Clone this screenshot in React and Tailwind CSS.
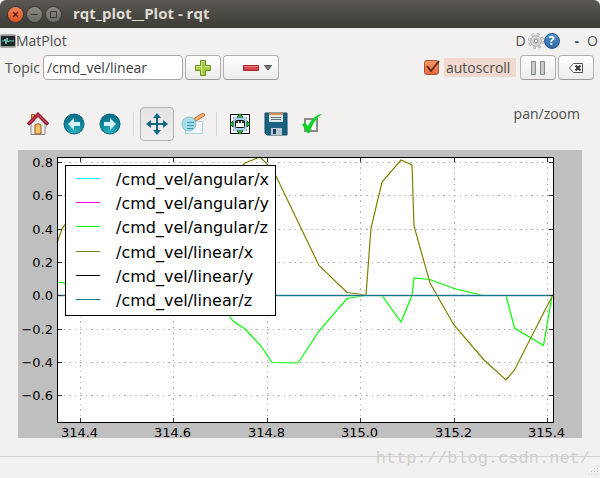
import React from "react";

const X_TICKS = [
  [62.5, "314.4"], [155.5, "314.6"], [249.5, "314.8"],
  [342.5, "315.0"], [436.5, "315.2"], [529.5, "315.4"],
];
const Y_TICKS = [
  [12.5, "0.8"], [45.5, "0.6"], [79.5, "0.4"], [112.5, "0.2"],
  [145.5, "0.0"], [179.5, "−0.2"], [212.5, "−0.4"], [245.5, "−0.6"],
];
const SERIES = [
  ["/cmd_vel/angular/x", "#00ffff"],
  ["/cmd_vel/angular/y", "#ff00ff"],
  ["/cmd_vel/angular/z", "#00ff00"],
  ["/cmd_vel/linear/x", "#808000"],
  ["/cmd_vel/linear/y", "#000000"],
  ["/cmd_vel/linear/z", "#008080"],
];
const LINEAR_X =
  "39,93 44,79 50,70 100,140 180,80 225,15 227,13 242,7 249,14 258,26 282,76 301,115.5 329,142.5 348,145 353,78 364,32 383,10 394,15 396,76 412,133 436,175 466,210 488,230 496.5,220 526,162 534.5,146";
const ANGULAR_Z =
  "39,132.5 45,132.5 50,136 120,140 200,150 211,165 215,171 227,179 243,196 254,212.5 280,213 282,210 301,181 329,148.5 348,145.5 364,145.5 383,172 394,145.5 396,128 412,129.5 436,138.5 465,145.5 488,145.5 496.5,178 525.5,195.5 534,146";

function Plot() {
  return (
    <svg viewBox="0 0 564 288" className="block w-full overflow-visible bg-[#bfbfbf] font-['DejaVu_Sans',sans-serif]" role="img" aria-label="Topic values over time">
      <rect x="39.5" y="7.5" width="496" height="265" fill="#fff" />
      <g stroke="#b4b4b4" strokeDasharray="2 4 1 4">
        {X_TICKS.map(([x]) => <line key={x} x1={x} x2={x} y1="272" y2="8" />)}
        {Y_TICKS.map(([y]) => <line key={y} x1="40" x2="535" y1={y} y2={y} />)}
      </g>
      <polyline points={ANGULAR_Z} fill="none" stroke="#00ff00" strokeWidth="1.2" />
      <polyline points={LINEAR_X} fill="none" stroke="#808000" strokeWidth="1.2" />
      <line x1="40" x2="535" y1="145.5" y2="145.5" stroke="#9db9c9" strokeWidth="2" />
      <line x1="40" x2="535" y1="145.5" y2="145.5" stroke="#137a8c" />
      <g stroke="#333">
        {X_TICKS.map(([x]) => <path key={x} d={`M${x} 8v4M${x} 272v-4`} />)}
        {Y_TICKS.map(([y]) => <path key={y} d={`M40 ${y}h4M535 ${y}h-4`} />)}
      </g>
      <rect x="39.5" y="7.5" width="496" height="265" fill="none" stroke="#000" />
      <g fontSize="13" fill="#000">
        {X_TICKS.map(([x, t]) => <text key={t} x={x - 1} y="287" textAnchor="middle">{t}</text>)}
        {Y_TICKS.map(([y, t]) => <text key={t} x="35" y={y + 4} textAnchor="end">{t}</text>)}
      </g>
      <rect x="47.5" y="15.5" width="210" height="150" fill="#fff" stroke="#000" />
      {SERIES.map(([name, color], i) => (
        <g key={name}>
          <rect x="58" width="24" height="1" y={28 + Math.round(i * 24.2)} fill={color} shapeRendering="crispEdges" />
          <text x="98" y={35 + Math.round(i * 24.2)} fontSize="16">{name}</text>
        </g>
      ))}
    </svg>
  );
}

const toolClass = "flex h-9 w-9 items-center justify-center";
const pushClass = "flex h-[25px] w-9 items-center justify-center rounded-[4px] border border-[#b3b0ac] border-b-[#9c9995] bg-linear-to-b from-white to-[#ececeb]";

function Arrow({ flip }) {
  return (
    <svg width="22" height="22" viewBox="0 0 22 22">
      <defs>
        <radialGradient id={flip ? "orbB" : "orbF"} cx="50%" cy="85%" r="75%">
          <stop offset="0" stopColor="#25b1c0" />
          <stop offset="1" stopColor="#08708c" />
        </radialGradient>
      </defs>
      <circle cx="11" cy="11" r="10" fill={flip ? "url(#orbB)" : "url(#orbF)"} stroke="#086580" />
      <path d="M5 9h6V5l6 6-6 6v-4H5z" fill="#d5f0f4" transform={flip ? "matrix(-1 0 0 1 22 0)" : undefined} />
    </svg>
  );
}

export default function App() {
  return (
    <div className="flex min-h-screen flex-col bg-[#f2f1f0] font-['Open_Sans','Noto_Sans',sans-serif] text-sm text-[#4c4c4c]">
      <header className="flex h-7 items-center rounded-t-md bg-linear-to-b from-[#5a5851] to-[#3c3b37] pl-2">
        <div className="flex gap-1">
          <button aria-label="Close" className="flex h-[15px] w-[15px] items-center justify-center rounded-full bg-linear-to-b from-[#f58157] to-[#e2501f] ring-1 ring-[#3a3935]">
            <svg width="7" height="7" viewBox="0 0 7 7"><path d="M1 1l5 5M6 1l-5 5" stroke="#52200f" strokeWidth="1.3" /></svg>
          </button>
          <button aria-label="Minimize" className="flex h-[15px] w-[15px] items-center justify-center rounded-full bg-linear-to-b from-[#8b8980] to-[#6e6c66] ring-1 ring-[#3a3935]">
            <svg width="7" height="7" viewBox="0 0 7 7"><path d="M0 3.5h7" stroke="#3a3935" /></svg>
          </button>
          <button aria-label="Maximize" className="flex h-[15px] w-[15px] items-center justify-center rounded-full bg-linear-to-b from-[#8b8980] to-[#6e6c66] ring-1 ring-[#3a3935]">
            <svg width="7" height="7" viewBox="0 0 7 7"><path d="M.5.5h6v6h-6z" fill="none" stroke="#3a3935" /></svg>
          </button>
        </div>
        <h1 className="ml-3 text-[15px] font-bold text-[#dfdbd2]">rqt_plot__Plot - rqt</h1>
      </header>

      <div className="flex h-[26px] items-center">
        <svg width="16" height="14" viewBox="0 0 16 14">
          <rect x=".5" y=".5" width="15" height="13" rx="1" fill="#999" stroke="#aaa" />
          <rect x="1" y="2" width="14" height="10" fill="#1d2928" />
          <path d="M2 7h2l1-2 1 5 1-6 1 4 1-1h5" fill="none" stroke="#6fd6bd" />
        </svg>
        <h2 className="text-sm">MatPlot</h2>
        <div className="ml-auto flex items-center pr-[2px]">
          <button>D</button>
          <button aria-label="Settings" className="ml-[2px]">
            <svg width="16" height="16" viewBox="0 0 16 16">
              <circle cx="8" cy="8" r="6.5" fill="none" stroke="#a9a9a7" strokeWidth="3" strokeDasharray="2.55 2.55" />
              <circle cx="8" cy="8" r="6.3" fill="none" stroke="#dcdcda" strokeWidth="2" strokeDasharray="1.6 3.348" strokeDashoffset="-.5" />
              <circle cx="8" cy="8" r="5.3" fill="#dededc" stroke="#a6a6a4" strokeWidth=".8" />
              <circle cx="8" cy="8" r="3.2" fill="none" stroke="#c2c2c0" />
              <circle cx="8" cy="8" r="1.8" fill="#f2f1f0" stroke="#8d8d8b" />
            </svg>
          </button>
          <button aria-label="Help" className="flex h-4 w-4 items-center justify-center rounded-full border border-[#265889] bg-linear-to-b from-[#5692cb] to-[#2e69a5] text-xs font-bold text-white">?</button>
          <button className="ml-[15px] font-bold">-</button>
          <button className="ml-2">O</button>
        </div>
      </div>

      <div className="flex h-[27px] items-center pr-[6px] pl-[5px]">
        <label htmlFor="topic" className="w-[38px]">Topic</label>
        <input id="topic" defaultValue="/cmd_vel/linear" className="h-[25px] w-[140px] rounded-[4px] border border-[#a9a6a2] bg-white px-[3px] text-sm text-[#3c3c3c] outline-none" />
        <button aria-label="Add topic" className={pushClass + " ml-[2px]"}>
          <svg width="16" height="16" viewBox="0 0 16 16"><path d="M5.5.5h5v5h5v5h-5v5h-5v-5h-5v-5h5z" fill="#a9cf3f" stroke="#618e25" /><path d="M6.500 14V1.500h3M1.500 9V6.500h5M10 6.500h4.500" fill="none" stroke="#d2e68d" /></svg>
        </button>
        <button aria-label="Remove topic" className="ml-[2px] flex h-[25px] w-14 items-center justify-end gap-[5px] rounded-[4px] border border-[#b3b0ac] border-b-[#9c9995] bg-linear-to-b from-white to-[#ececeb] pr-[6px]">
          <svg width="16" height="6" viewBox="0 0 16 6"><path d="M.5.5h15v5H.5z" fill="#d9434b" stroke="#a5222f" /><path d="M1 1.5h14" stroke="#e98389" /></svg>
          <svg width="8" height="6" viewBox="0 0 8 6"><path d="M.5.5h7L4 5z" fill="#777" stroke="#555" /></svg>
        </button>
        <label className="ml-auto flex items-center gap-[5px]">
          <span className="relative flex">
            <input type="checkbox" defaultChecked className="h-[15px] w-[15px] appearance-none rounded-[3px] border border-[#a8502e] bg-linear-to-b from-[#fa9468] to-[#ec6a3a]" />
            <svg className="pointer-events-none absolute top-0 left-[2px]" width="14" height="14" viewBox="0 0 14 14"><path d="M1 6l4 5L13 1" fill="none" stroke="#54301f" strokeWidth="2" /></svg>
          </span>
          <span className="w-[72px] bg-[#f1d9cf] pl-[2px] leading-[19px]">autoscroll</span>
        </label>
        <button aria-label="Pause" className={pushClass + " ml-1"}>
          <svg width="14" height="14" viewBox="0 0 14 14"><path d="M.5.5h4v13h-4zM9.500.5h4v13h-4z" fill="#c9ccc9" stroke="#898b88" /></svg>
        </button>
        <button aria-label="Clear" className={pushClass + " ml-[2px]"}>
          <svg width="14" height="10" viewBox="0 0 14 10"><path d="M4.500.5h9v9h-9L.5 5z" fill="#fff" stroke="#555" /><path d="M6.500 2.500l5 5M11.500 2.500l-5 5" stroke="#333" strokeWidth="2" /></svg>
        </button>
      </div>

      <div className="mt-[17px] mb-px flex h-[51px] items-center px-5">
        <button aria-label="Home" className={toolClass}>
          <svg width="22" height="24" viewBox="0 0 22 24">
            <path d="M4.500 2.500h3v7h-3z" fill="#efb04a" stroke="#a55b20" />
            <path d="M4 12l7-8 7 8v10.500H4z" fill="#eee" stroke="#8b8b8b" />
            <path d="M8 22v-9q3-3 6 0v9z" fill="#fbc060" stroke="#985a28" />
            <path d="M1 12.500L11 2.500l10 10" fill="none" stroke="#8b1530" strokeWidth="3.4" />
            <path d="M2 11.500l9-9 9 9" fill="none" stroke="#cc3c50" strokeWidth="1.5" />
          </svg>
        </button>
        <button aria-label="Back" className={toolClass}><Arrow flip /></button>
        <button aria-label="Forward" className={toolClass}><Arrow /></button>
        <div className="mx-[5px] h-6 w-px bg-[#d6d4d1]" />
        <button aria-label="Pan" aria-pressed="true" className="mx-px flex h-[34px] w-[34px] items-center justify-center rounded-[4px] border border-[#b6b3b0] bg-linear-to-b from-[#e4e3e2] to-[#f0efee]">
          <svg width="22" height="22" viewBox="0 0 22 22"><path d="M11 3v16M3 11h16" stroke="#0d6885" strokeWidth="2" /><path d="M11 0l4 5H7zM11 22l4-5H7zM0 11l5-4v8zM22 11l-5-4v8z" fill="#0d6885" /></svg>
        </button>
        <button aria-label="Zoom" className={toolClass}>
          <svg width="24" height="22" viewBox="0 0 24 22">
            <path d="M4.500 8.500h17v12h-17z" fill="#f4f9fb" stroke="#a9d3e3" />
            <path d="M13 8l3-3" stroke="#999" strokeWidth="3" /><path d="M15 6l7-4" stroke="#c1692d" strokeWidth="4" strokeLinecap="round" /><path d="M15 6l7-4" stroke="#ffb273" strokeWidth="2.5" strokeLinecap="round" />
            <circle cx="8" cy="11" r="7" fill="#a7dce7" stroke="#86bfd0" /><path d="M6 9.500h7M6 12.500h7M6 15.500h6" stroke="#3d98b3" />
          </svg>
        </button>
        <div className="mx-[5px] h-6 w-px bg-[#d6d4d1]" />
        <button aria-label="Subplots" className={toolClass}>
          <svg width="22" height="22" viewBox="0 0 22 22">
            <rect x="1.500" y="1.500" width="19" height="19" fill="#fff" stroke="#111" />
            <rect x="4" y="4" width="14" height="14" fill="#a9cbe8" />
            <rect x="6.500" y="7.500" width="9" height="7" rx="1" fill="#fff" stroke="#111" /><path d="M7 8h8v2H7z" fill="#333" /><path d="M9.500 8v2M12.500 8v2" stroke="#fff" />
            <path d="M8 4l3-3 3 3zM8 18l3 3 3-3zM4 8l-3 3 3 3zM18 8l3 3-3 3z" fill="#3fc04d" stroke="#075e16" />
          </svg>
        </button>
        <button aria-label="Save" className={toolClass}>
          <svg width="24" height="24" viewBox="0 0 24 24">
            <path d="M1 1h22v22H3l-2-2z" fill="#18617f" stroke="#104a65" />
            <path d="M5 1h14v9H5z" fill="#dfe8eb" /><path d="M5 1h14v2H5z" fill="#e1884b" /><path d="M7 5.500h10M7 7.500h10" stroke="#5f727a" />
            <path d="M7 16h11v7H7z" fill="#b7c8d1" /><path d="M9 17h3v5H9z" fill="#183a5c" />
          </svg>
        </button>
        <button aria-label="Edit" className={toolClass}>
          <svg width="22" height="20" viewBox="0 0 22 20"><path d="M4 5h12v12H4z" fill="#fff" stroke="#898989" strokeWidth="2" /><path d="M1 10.500L4 8.500l3 3.500C10 6 14 1 21 0C15 4 11 11 8.500 19L6.500 19z" fill="#0bd326" /></svg>
        </button>
        <p className="mb-5 ml-auto">pan/zoom</p>
      </div>

      <main className="px-[18px]"><Plot /></main>

      <footer className="relative mt-[18px] flex grow items-start justify-end border-t border-[#d5d3d0] pr-[10px]">
        <span className="-mt-2 font-['Liberation_Mono',monospace] text-[17px] leading-5 text-[#d2d0cb]">http://blog.csdn.net/</span>
        <svg className="absolute right-[2px] bottom-[2px]" width="10" height="11" viewBox="0 0 10 11" fill="#c9c6c2">
          <path d="M9 0h1v1H9zM9 3h1v1H9zM6 3h1v1H6zM9 6h1v1H9zM6 6h1v1H6zM3 6h1v1H3zM9 9h1v1H9zM6 9h1v1H6zM3 9h1v1H3zM0 9h1v1H0z" />
        </svg>
      </footer>
    </div>
  );
}
